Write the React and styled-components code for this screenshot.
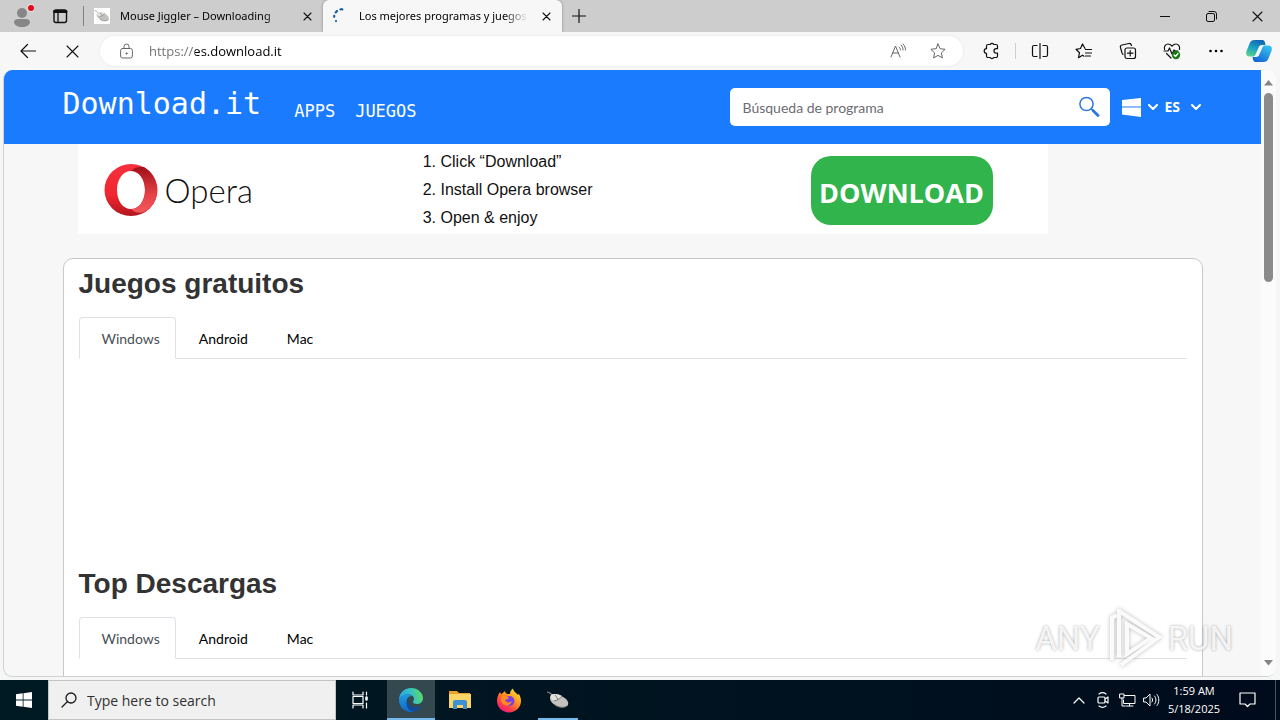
import React, { useState } from "react";
import styled, { createGlobalStyle, css } from "styled-components";

const ui = `"Open Sans", "Noto Sans", sans-serif`;
const site = `Lato, "Open Sans", sans-serif`;
const mono = `"DejaVu Sans Mono", "Liberation Mono", monospace`;
const arial = `"Liberation Sans", Arial, sans-serif`;

const GlobalStyle = createGlobalStyle`
  *, *::before, *::after { box-sizing: border-box; }
  body { margin: 0; font-family: ${ui}; color: #000; }
  button, input, select { font: inherit; color: inherit; border: 0; padding: 0; margin: 0; background: none; }
  svg { display: block; flex: none; }
  a { color: inherit; text-decoration: none; }
`;

const Desktop = styled.div`
  display: flex;
  flex-direction: column;
  height: 100vh;
  overflow: hidden;
  background: #f5f6f6;
`;

/* ---------- browser window ---------- */

const TabStrip = styled.div`
  display: flex;
  align-items: stretch;
  height: 32px;
  padding-left: 3px;
  background: #cdcdcd;
`;

const IconButton = styled.button`
  display: flex;
  align-items: center;
  justify-content: center;
  flex: none;
  width: ${(p) => p.$w}px;
  height: ${(p) => (p.$h ? `${p.$h}px` : "100%")};
  color: ${(p) => p.$color || "#111"};
`;

const StripDivider = styled.span`
  align-self: center;
  width: 1px;
  height: 20px;
  margin-left: 4px;
  background: #808080;
`;

const Tab = styled.div`
  display: flex;
  align-items: center;
  gap: 10px;
  width: 239px;
  padding: 0 8px 0 10px;
  font-family: "Noto Sans", sans-serif;
  font-size: 11px;
  border-radius: 6px 6px 0 0;
  ${(p) => p.$active && css`
    background: #f7f7f7;
    box-shadow: 0 0 3px rgba(0, 0, 0, 0.35);
    clip-path: inset(0 -4px 0 -4px);
  `}
`;

const TabTitle = styled.span`
  flex: 1;
  min-width: 0;
  overflow: hidden;
  white-space: nowrap;
  line-height: 16px;
  mask-image: linear-gradient(to right, #000 calc(100% - 24px), transparent);
`;

const WindowControls = styled.div`
  display: flex;
  margin-left: auto;
`;

const Toolbar = styled.div`
  display: flex;
  align-items: center;
  height: 38px;
  padding-left: 6px;
  background: #f7f7f7;
`;

const AddressBar = styled.div`
  display: flex;
  align-items: center;
  flex: 1;
  height: 30px;
  margin: 0 6px;
  padding: 0 6px 0 20px;
  background: #fff;
  border-radius: 15px;
  box-shadow: 0 0 3px rgba(0, 0, 0, 0.08);
`;

const AddressInput = styled.input`
  flex: 1;
  min-width: 0;
  height: 30px;
  margin-left: 16px;
  outline: 0;
  font-size: 13px;
  color: #000;
  background: linear-gradient(to right, #6e6e6e 46px, #000 46px);
  background-clip: text;
  -webkit-text-fill-color: transparent;
`;

const ToolDivider = styled.span`
  width: 1px;
  height: 16px;
  margin: 0 2px;
  background: #cfcfcf;
`;

const Viewport = styled.main`
  position: relative;
  display: flex;
  flex: 1;
  min-height: 0;
  margin: 0 4px 3px 3px;
  overflow: hidden;
  border: solid #d2d2d2;
  border-width: 0 0 1px 1px;
  border-radius: 9px;
  background: #f7f7f7;
`;

const Scrollbar = styled.div`
  display: flex;
  flex-direction: column;
  align-items: center;
  width: 15px;
  padding: 10px 0;
  background: #fbfbfb;
`;

const Thumb = styled.span`
  width: 9px;
  height: 189px;
  margin-top: 7px;
  margin-bottom: auto;
  border-radius: 5px;
  background: #8b8b8b;
`;

/* ---------- site ---------- */

const Site = styled.div`
  flex: 1;
  min-width: 0;
  overflow: hidden;
  font-family: ${site};
`;

const Container = styled.div`
  width: 100%;
  max-width: 1140px;
  margin: 0 auto;
`;

const Header = styled.header`
  background: #1a7bff;
  color: #fff;
`;

const HeaderRow = styled(Container)`
  display: flex;
  align-items: center;
  height: 74px;
`;

const Brand = styled.a`
  padding-bottom: 6px;
  font-family: ${mono};
  font-size: 30px;
  line-height: 36px;
`;

const Nav = styled.nav`
  display: flex;
  gap: 20px;
  margin-left: 33px;
  padding-top: 8px;
  font-family: ${mono};
  font-size: 17px;
  line-height: 20px;
`;

const SearchForm = styled.form`
  display: flex;
  align-items: center;
  width: 380px;
  height: 38px;
  margin-left: auto;
  padding: 0 9px 0 13px;
  border-radius: 5px;
  background: #fff;
`;

const SearchInput = styled.input`
  flex: 1;
  min-width: 0;
  outline: 0;
  font-size: 14px;
  color: #333;
  &::placeholder { color: #6c6c74; opacity: 1; }
`;

const PlatformButton = styled.button`
  display: flex;
  align-items: center;
  gap: 7px;
  margin-left: 12px;
`;

const Language = styled.label`
  display: flex;
  align-items: center;
  gap: 7px;
  margin: 0 2px 0 7px;
`;

const LanguageSelect = styled.select`
  appearance: none;
  width: 19px;
  outline: 0;
  font-family: ${ui};
  font-size: 14px;
  font-weight: 700;
  line-height: 18px;
`;

const Banner = styled.section`
  display: grid;
  grid-template-columns: 345px 388px 1fr;
  align-items: center;
  max-width: 970px;
  height: 90px;
  margin: 0 15px 24px;
  padding-top: 2px;
  background: #fff;
`;

const OperaMark = styled.div`
  display: flex;
  align-items: center;
  gap: 7px;
  padding-left: 26px;
  font-size: 33px;
  font-weight: 300;
  line-height: 36px;
  color: #111;
`;

const Steps = styled.ol`
  margin: 0;
  padding: 0 0 0 18px;
  font-family: ${arial};
  font-size: 16px;
  line-height: 28px;
  color: #111;
`;

const DownloadLink = styled.a`
  display: flex;
  align-items: center;
  justify-content: center;
  width: 182px;
  height: 69px;
  padding-top: 4px;
  border-radius: 20px;
  background: #31b44b;
  color: #fff;
  font-family: ${ui};
  font-size: 27px;
  font-weight: 700;
`;

const Card = styled(Container)`
  padding: 10px 15px;
  border: 1px solid #c8c8c8;
  border-radius: 10px;
  background: #fff;
`;

const SectionTitle = styled.h2`
  margin: 0 0 18px;
  font-family: ${arial};
  font-size: 28px;
  line-height: 30px;
  font-weight: 700;
  color: #333;
`;

const TabList = styled.div`
  display: flex;
  border-bottom: 1px solid #dee2e6;
`;

const PlatformTab = styled.button`
  height: 42px;
  margin-bottom: -1px;
  padding: 0 15px 0 22px;
  border: 1px solid transparent;
  border-radius: 4px 4px 0 0;
  font-size: 14px;
  color: #000;
  ${(p) => p.$active && css`
    border-color: #dee2e6 #dee2e6 #fff;
    background: #fff;
    color: #495057;
  `}
`;

const Panel = styled.div`
  min-height: 210px;
`;

const Watermark = styled.div`
  position: absolute;
  right: 43px;
  bottom: 4px;
  display: flex;
  align-items: center;
  gap: 5px;
  font-family: Roboto, sans-serif;
  font-size: 33px;
  line-height: 66px;
  color: rgba(255, 255, 255, 0.85);
  text-shadow: 0 0 3px rgba(0, 0, 0, 0.35);
  pointer-events: none;
  svg { filter: drop-shadow(0 0 2px rgba(0, 0, 0, 0.3)); }
`;

/* ---------- taskbar ---------- */

const Taskbar = styled.footer`
  display: flex;
  align-items: stretch;
  height: 40px;
  background: linear-gradient(to right, #001a24, #001420 50%, #000b1c);
  color: #fff;
`;

const TaskSearch = styled.label`
  display: flex;
  align-items: center;
  gap: 10px;
  width: 288px;
  padding-left: 12px;
  border: 1px solid #c4c4c4;
  background: #f0f0f0;
  color: #1c1c1c;
`;

const TaskInput = styled.input`
  flex: 1;
  min-width: 0;
  outline: 0;
  font-size: 14px;
  &::placeholder { color: #303030; opacity: 1; }
`;

const TaskButton = styled.button`
  display: flex;
  align-items: center;
  justify-content: center;
  width: 48px;
  margin-left: ${(p) => p.$gap || 0}px;
  background: ${(p) => (p.$focused ? "#33484f" : "none")};
  box-shadow: ${(p) => (p.$focused ? "inset 0 -2px #76b9ed" : "none")};
  ${(p) => p.$open && css`
    background: linear-gradient(#76b9ed, #76b9ed) center bottom / 40px 2px no-repeat;
  `}
`;

const Tray = styled.div`
  display: flex;
  align-items: center;
  margin-left: auto;
`;

const Clock = styled.time`
  width: 62px;
  text-align: center;
  font-size: 11px;
  line-height: 18px;
`;

const ShowDesktop = styled.button`
  align-self: stretch;
  width: 5px;
  margin-left: 6px;
  border-left: 1px solid #4a5260;
`;

/* ---------- icons ---------- */

const Line = ({ w, h = w, sw = 1, children, ...rest }) => (
  <svg width={w} height={h} viewBox={`0 0 ${w} ${h}`} fill="none" stroke="currentColor"
    strokeWidth={sw} strokeLinecap="round" strokeLinejoin="round" aria-hidden="true" {...rest}>
    {children}
  </svg>
);

const Avatar = () => (
  <svg width="24" height="26" viewBox="0 0 24 26" aria-hidden="true">
    <circle cx="12" cy="10" r="5" fill="#868686" />
    <path d="M4 19c0-2 2-3 4-3h8c2 0 4 1 4 3 0 3-4 5-8 5s-8-2-8-5z" fill="#868686" />
    <circle cx="21" cy="5" r="4" fill="#e5e0e0" />
    <circle cx="21" cy="5" r="3" fill="#e00b1c" />
  </svg>
);

const Workspaces = () => (
  <Line w={16} h={16}>
    <rect x="2" y="2" width="12.500" height="12.500" rx="2" strokeWidth="1.4" />
    <path d="M2.500 3.500h11.500" strokeWidth="3" /><path d="M6 4v10" strokeWidth="1.3" />
  </Line>
);

const MouseArt = ({ size = 16 }) => (
  <svg width={size} height={size} viewBox="0 0 24 24" aria-hidden="true">
    <path d="M1 4c3 0 3 2 6 3" stroke="#9a9a9a" strokeWidth="1.2" fill="none" />
    <path d="M5 7c3-2 8-1 12 2 4 2 6 5 5 8-2 3-7 3-11 1C6 16 2 11 5 7z" fill="#c4c2bf" />
    <path d="M5 7c3-2 8-1 11 1-1 2-4 4-8 5C5 11 4 9 5 7z" fill="#e4e2df" />
    <path d="M8 13c4-1 7-3 8-5M9 7l3 4M9 17c4 3 10 3 13 0" stroke="#7b7875" strokeWidth="1" fill="none" />
  </svg>
);

const Favicon = styled.span`
  display: flex;
  align-items: center;
  justify-content: center;
  flex: none;
  width: 16px;
  height: 16px;
  background: ${(p) => (p.$plain ? "none" : "#fff")};
`;

const Spinner = () => (
  <Line w={16} stroke="#1560a8" sw={2.2}>
    <path d="M7.500 1.400C8.500 1 9 1.100 9.300 1.300" /><path d="M2.700 4.400 4 3" />
    <path d="M1.200 8.800V7.800" /><path d="M3 13v.1" />
  </Line>
);

const Cross = ({ size = 9, sw = 1.1 }) => (
  <Line w={size} sw={sw}><path d={`M1 1 ${size - 1} ${size - 1}M${size - 1} 1 1 ${size - 1}`} /></Line>
);

const Lock = () => (
  <Line w={13} h={17} stroke="#666"><rect x=".6" y="5.500" width="11.800" height="9.500" rx="2" />
    <path d="M4 5.500V3.500a2.500 2.500 0 0 1 5 0v2" /><circle cx="6.500" cy="10.500" r=".6" fill="#666" /></Line>
);

const ReadAloud = () => (
  <Line w={18} stroke="#666"><path d="M2 15 6.500 4l4.500 11M3.500 11h6M10 5c1 1 1.500 2 1.500 3M12 3c1.500 1.500 2 3 2 5M14 2c2 2 2.500 4 2.500 6" transform="translate(-1 0)" /></Line>
);

const starPath = "M9 2l2.100 4.700 5 .6-3.700 3.500 1 5.100L9 13.400 4.600 15.900l1-5.100L1.900 7.300l5-.6z";

const Star = () => <Line w={18} stroke="#666"><path d={starPath} /></Line>;

const Puzzle = () => (
  <Line w={18} sw={1.2}><path d="M6 2.500h2.200a2 2 0 0 1 3.600 0H14a1.500 1.500 0 0 1 1.500 1.500v2.700h-1.300a2.200 2.200 0 0 0 0 4.400h1.300V14a1.500 1.500 0 0 1-1.500 1.500h-2.200a2 2 0 0 1-3.600 0H6A1.500 1.500 0 0 1 4.500 14v-2.700a2.300 2.300 0 0 1 0-4.600V4A1.500 1.500 0 0 1 6 2.500z" /></Line>
);

const Split = () => (
  <Line w={18} sw={1.2}><path d="M6 3.500H3A1.500 1.500 0 0 0 1.500 5v8A1.500 1.500 0 0 0 3 14.500h3M12 3.500h3A1.500 1.500 0 0 1 16.500 5v8a1.500 1.500 0 0 1-1.500 1.500h-3M9 1.500v15" /></Line>
);

const Favorites = () => (
  <Line w={18} sw={1.2}><path d="M10 6.500 7.500 2 5.500 6.500l-4.500.8 3.500 3.400-1 5 4-2.500 1.500 1M10.500 7.500h6M10.500 11h6M10.500 14h5" /></Line>
);

const Collections = () => (
  <Line w={18} sw={1.2}><rect x="6" y="6" width="10.500" height="10.500" rx="2" />
    <path d="M11.200 8.500v5.500M8.500 11.200H14M4 12.500 3 11 1.500 5.500C1 4.300 1.700 3.300 3 3l7-1.500c1.200-.2 2 .3 2.500 2" /></Line>
);

const Health = () => (
  <Line w={18} sw={1.2}><path d="M1.500 7.500C.8 3.800 3 2 5 2c1.800 0 3 1 4 2.200C10 3 11.200 2 13 2c2 0 4.200 1.800 3.500 5.500M1 9h4l1.500-3 2.500 6 2-4 1 1h3M3.500 11.500 8 16" />
    <circle cx="13" cy="13" r="4.200" fill="#167a16" stroke="none" /><path d="m11 13 1.500 1.500 2.500-3" stroke="#fff" /></Line>
);

const Dots = () => (
  <svg width="16" height="4" viewBox="0 0 16 4" aria-hidden="true"><circle cx="2.500" cy="2" r="1.300" /><circle cx="8" cy="2" r="1.300" /><circle cx="13.500" cy="2" r="1.300" /></svg>
);

const Copilot = () => (
  <svg width="26" height="24" viewBox="0 0 24 24" preserveAspectRatio="none" aria-hidden="true">
    <defs>
      <linearGradient id="cpA" x1="0.600" y1="0" x2="0.200" y2="1"><stop offset="0" stopColor="#1267b4" /><stop offset=".5" stopColor="#1aa3c4" /><stop offset="1" stopColor="#5fd28b" /></linearGradient>
      <linearGradient id="cpB" x1="0.800" y1="0" x2="0.200" y2="1"><stop offset="0" stopColor="#36c3f0" /><stop offset="1" stopColor="#1563d2" /></linearGradient>
    </defs>
    <path d="M8 1h7c2 0 2.500 1.500 3 5h-3c-2 0-3 1-3.500 3L9 15c-.5 2-1.500 2.500-3 2.500H3C0 17.500-.3 14.500.5 12L3.500 4C4.300 2 5.500 1 8 1z" fill="url(#cpA)" />
    <path d="M16 23H9c-2 0-2.500-1.500-3-5h3c2 0 3-1 3.500-3L15 9c.5-2 1.500-2.500 3-2.500h3c3 0 3.300 3 2.500 5.500l-3 8c-.8 2-2 3-4.500 3z" fill="url(#cpB)" />
  </svg>
);

const Chevron = () => <Line w={10} h={6} sw={2}><path d="m1 1 4 4 4-4" /></Line>;

const Magnifier = () => (
  <Line w={22} stroke="#2f76e0"><circle cx="8.500" cy="8" r="6.600" strokeWidth="1.500" /><path d="m15 14.500 5 5" strokeWidth="2.800" /><path d="m13 12.500 2 2" strokeWidth="1.500" /></Line>
);

const WindowsPanes = () => (
  <svg width="19" height="19" viewBox="0 0 19 19" fill="#fff" aria-hidden="true"><path d="M0 2 19 0v8.500H0zM0 9.500h19V19L0 16.400z" /></svg>
);

const StartLogo = () => (
  <svg width="16" height="16" viewBox="0 0 16 16" fill="#fff" aria-hidden="true"><path d="M0 2.200 6.700 1.300v6.200H0zM7.500 1.200 16 0v7.500H7.500zM0 8.400h6.700v6.300L0 13.800zM7.500 8.400H16V16l-8.500-1.200z" /></svg>
);

const OperaO = () => (
  <svg width="54" height="54" viewBox="0 0 54 54" aria-hidden="true">
    <defs>
      <linearGradient id="opA" x1="0" y1="0" x2="0" y2="1"><stop offset="0" stopColor="#f5303e" /><stop offset=".6" stopColor="#f0262f" /><stop offset="1" stopColor="#b3161f" /></linearGradient>
      <linearGradient id="opB" x1="0" y1="0" x2="0" y2="1"><stop offset="0" stopColor="#a01018" /><stop offset=".6" stopColor="#e64247" /><stop offset="1" stopColor="#f2585c" /></linearGradient>
    </defs>
    <path fillRule="evenodd" d="M27 1a26.500 26 0 1 0 0 52 26.500 26 0 1 0 0-52zm0 7c8 0 14 8 14 19s-6 19-14 19-14-8-14-19S19 8 27 8z" fill="url(#opA)" />
    <path d="M27 8c3-4 8-4 13-4 8 5 13 13 13 23s-5 18-13 22c-5 2-10 0-13-3 8 0 14-8 14-19S35 8 27 8z" fill="url(#opB)" />
  </svg>
);

const Play = () => (
  <svg width="58" height="66" viewBox="0 0 58 66" fill="none" stroke="rgba(255,255,255,.9)" strokeWidth="4" aria-hidden="true">
    <path d="M7 54V12l5-3M14 5l40 26-38 28M14 3v48M22 18v30l24-16z" />
  </svg>
);

const TaskView = () => (
  <Line w={18} sw={1.2}><path d="M2 1v3h10V1M2 17v-3h10v3M2 5.500v7h10v-7zM15.500 1v3M15.500 12v5" /><path d="M15.500 6.500v2" strokeWidth="2.500" /></Line>
);

const Edge = () => (
  <svg width="26" height="26" viewBox="0 0 26 26" aria-hidden="true">
    <defs>
      <linearGradient id="edA" x1="0" y1="0.500" x2="1" y2="0.300"><stop offset="0" stopColor="#2aa7e8" /><stop offset=".5" stopColor="#35c1c9" /><stop offset="1" stopColor="#5fdc5a" /></linearGradient>
      <linearGradient id="edB" x1="0" y1="0" x2="0" y2="1"><stop offset="0" stopColor="#1f9be0" /><stop offset="1" stopColor="#1268c4" /></linearGradient>
    </defs>
    <path d="M1 13C1 6 6 1 13 1c7 0 12 5 12 10 0 4-3 6-6 6-2.500 0-4-.8-4-2 0-.9 1-1.300 1-3 0-2.400-2.300-4.500-6-4.500C5 7.500 2 10 1 13z" fill="url(#edA)" />
    <path d="M1 13c1-3.500 4.500-5.500 8.500-5.500 2 0 3.500.6 4.700 1.500C10 9 8.500 12 8.500 15c0 5 4 9 8 9.400-1 .4-2.300.6-3.500.6C6 25 1 19.500 1 13z" fill="url(#edB)" />
    <path d="M10 12c-1 5 3 9 8 8.500 2 0 3.500-.6 4.500-1 .6-.2.800.2.500.6-2 3-5 4.500-8 4.300-5-.5-8.500-6.400-5-12.400z" fill="#134b9b" />
  </svg>
);

const Explorer = () => (
  <svg width="24" height="20" viewBox="0 0 24 20" aria-hidden="true">
    <path d="M1 1h8l2 2h11v5H1z" fill="#e8a32b" /><path d="M1 4h22v14H1z" fill="#fcd569" />
    <path d="M5 19v-7c0-1 .8-2 2-2h10c1.200 0 2 1 2 2v7h-4v-4H9v4z" fill="#3f92d0" />
  </svg>
);

const Firefox = () => (
  <svg width="24" height="25" viewBox="0 0 24 25" aria-hidden="true">
    <defs><linearGradient id="ffA" x1="0.900" y1="0" x2="0.200" y2="1"><stop offset="0" stopColor="#fff13d" /><stop offset=".4" stopColor="#ff9a1f" /><stop offset=".75" stopColor="#ff3b4c" /><stop offset="1" stopColor="#e5158a" /></linearGradient></defs>
    <path d="M3 4c.3 1 .8 1.700 1.500 2C5.500 4.800 7 4.300 8 3c.2 1.500 1 2.500 2.500 3H13c0-2 .8-4 3-5.500.3 3 3.500 4.500 5 6.500.5-.3.600-1 .5-1.500C23.300 8 24 10.300 24 13c0 6.500-5.500 11.500-12 11.500S0 19.500 0 13c0-3.500 1-6.500 3-9z" fill="url(#ffA)" />
    <circle cx="12.500" cy="13" r="5" fill="#7b3fe4" /><path d="M5 8c3-1 5 0 7 2-1 1.500-3 1.300-4 2 1 3 5 3 7 1-1 4-6 6-9 3-2-2-2.500-5-1-8z" fill="#ff8a1f" />
  </svg>
);

/* ---------- app ---------- */

const platforms = ["Windows", "Android", "Mac"];

function PlatformSection({ title }) {
  const [current, setCurrent] = useState("Windows");
  return (
    <section>
      <SectionTitle>{title}</SectionTitle>
      <TabList role="tablist" aria-label={title}>
        {platforms.map((name) => (
          <PlatformTab key={name} type="button" role="tab" aria-selected={name === current}
            $active={name === current} onClick={() => setCurrent(name)}>
            {name}
          </PlatformTab>
        ))}
      </TabList>
      <Panel role="tabpanel" />
    </section>
  );
}

export default function App() {
  return (
    <Desktop>
      <GlobalStyle />
      <TabStrip>
        <IconButton $w={38} aria-label="Profile"><Avatar /></IconButton>
        <IconButton $w={38} aria-label="Workspaces"><Workspaces /></IconButton>
        <StripDivider />
        <Tab>
          <Favicon><MouseArt /></Favicon>
          <TabTitle>Mouse Jiggler – Downloading</TabTitle>
          <IconButton $w={16} aria-label="Close tab"><Cross /></IconButton>
        </Tab>
        <Tab $active>
          <Favicon $plain><Spinner /></Favicon>
          <TabTitle>Los mejores programas y juegos</TabTitle>
          <IconButton $w={16} aria-label="Close tab"><Cross /></IconButton>
        </Tab>
        <IconButton $w={34} aria-label="New tab"><Line w={14} sw={1.2}><path d="M7 .5v13M.5 7h13" /></Line></IconButton>
        <WindowControls>
          <IconButton $w={46} aria-label="Minimize"><Line w={10}><path d="M0 5.500h10" /></Line></IconButton>
          <IconButton $w={46} aria-label="Restore">
            <Line w={11}><rect x=".5" y="2.500" width="8" height="8" rx="1.500" /><path d="M3 .5h5a2.500 2.500 0 0 1 2.500 2.500v5" /></Line>
          </IconButton>
          <IconButton $w={46} aria-label="Close"><Cross size={11} sw={1.1} /></IconButton>
        </WindowControls>
      </TabStrip>

      <Toolbar>
        <IconButton $w={44} aria-label="Back"><Line w={16} sw={1.2}><path d="M15.500 8H1M7.500 1.500 1 8l6.500 6.500" /></Line></IconButton>
        <IconButton $w={44} aria-label="Stop"><Cross size={13} sw={1.1} /></IconButton>
        <AddressBar>
          <Lock />
          <AddressInput aria-label="Address" defaultValue="https://es.download.it" spellCheck={false} />
          <IconButton $w={40} aria-label="Read aloud"><ReadAloud /></IconButton>
          <IconButton $w={38} aria-label="Add to favorites"><Star /></IconButton>
        </AddressBar>
        <IconButton $w={44} aria-label="Extensions"><Puzzle /></IconButton>
        <ToolDivider />
        <IconButton $w={44} aria-label="Split screen"><Split /></IconButton>
        <IconButton $w={44} aria-label="Favorites"><Favorites /></IconButton>
        <IconButton $w={44} aria-label="Collections"><Collections /></IconButton>
        <IconButton $w={44} aria-label="Browser essentials"><Health /></IconButton>
        <IconButton $w={44} aria-label="Settings and more"><Dots /></IconButton>
        <IconButton $w={42} aria-label="Copilot"><Copilot /></IconButton>
      </Toolbar>

      <Viewport>
        <Site>
          <Header>
            <HeaderRow>
              <Brand href="#">Download.it</Brand>
              <Nav>
                <a href="#apps">APPS</a>
                <a href="#juegos">JUEGOS</a>
              </Nav>
              <SearchForm role="search" onSubmit={(e) => e.preventDefault()}>
                <SearchInput aria-label="Búsqueda de programa" placeholder="Búsqueda de programa" />
                <IconButton $w={24} aria-label="Buscar"><Magnifier /></IconButton>
              </SearchForm>
              <PlatformButton type="button" aria-label="Plataforma"><WindowsPanes /><Chevron /></PlatformButton>
              <Language>
                <LanguageSelect aria-label="Idioma" defaultValue="ES"><option>ES</option></LanguageSelect>
                <Chevron />
              </Language>
            </HeaderRow>
          </Header>
          <Container>
            <Banner>
              <OperaMark><OperaO /><span>Opera</span></OperaMark>
              <Steps>
                <li>Click “Download”</li>
                <li>Install Opera browser</li>
                <li>Open &amp; enjoy</li>
              </Steps>
              <DownloadLink href="#download">DOWNLOAD</DownloadLink>
            </Banner>
          </Container>
          <Card>
            <PlatformSection title="Juegos gratuitos" />
            <PlatformSection title="Top Descargas" />
          </Card>
        </Site>
        <Scrollbar aria-hidden="true">
          <svg width="9" height="6" viewBox="0 0 9 6" fill="#858585"><path d="M4.500 0 9 5.500H0z" /></svg>
          <Thumb />
          <svg width="9" height="6" viewBox="0 0 9 6" fill="#858585"><path d="M4.500 5.500 9 0H0z" /></svg>
        </Scrollbar>
        <Watermark><span>ANY</span><Play /><span>RUN</span></Watermark>
      </Viewport>

      <Taskbar>
        <TaskButton aria-label="Start"><StartLogo /></TaskButton>
        <TaskSearch>
          <Line w={16} sw={1.3}><circle cx="10" cy="6" r="5" /><path d="M6.500 9.500 1 15" /></Line>
          <TaskInput aria-label="Type here to search" placeholder="Type here to search" />
        </TaskSearch>
        <TaskButton aria-label="Task View"><TaskView /></TaskButton>
        <TaskButton $gap={3} $focused aria-label="Microsoft Edge"><Edge /></TaskButton>
        <TaskButton $gap={1} aria-label="File Explorer"><Explorer /></TaskButton>
        <TaskButton $gap={1} aria-label="Firefox"><Firefox /></TaskButton>
        <TaskButton $gap={1} $open aria-label="Mouse Jiggler"><MouseArt size={24} /></TaskButton>
        <Tray>
          <IconButton $w={24} $color="#fff" aria-label="Show hidden icons"><Line w={12} h={7} sw={1.2}><path d="m1 6 5-5 5 5" /></Line></IconButton>
          <IconButton $w={24} $color="#fff" aria-label="Meet Now">
            <Line w={14} h={16} sw={1.2}><rect x="2" y="5" width="7" height="6" rx="1" /><path d="m9 7 3-2v6L9 9M3 2c2-1.500 5-1.500 7 0M3 14c2 1.500 5 1.500 7 0" /></Line>
          </IconButton>
          <IconButton $w={24} $color="#fff" aria-label="Network">
            <Line w={17} h={14}><path d="M5.500 2.500H16v8H4.500V7M1 1h4v4H1zM3 5v8h3M7 13h7M10.500 10.500V13" /></Line>
          </IconButton>
          <IconButton $w={24} $color="#fff" aria-label="Volume">
            <Line w={17} h={14}><path d="M1 5h2l4-4v12L3 9H1zM9 5c.8 1 .8 3 0 4M11.500 3c2 2.500 2 5.500 0 8M14 1.500c2.500 3 2.500 8 0 11" /></Line>
          </IconButton>
          <Clock>1:59 AM<br />5/18/2025</Clock>
          <IconButton $w={44} $color="#fff" aria-label="Notifications">
            <Line w={17} h={16} sw={1.2}><path d="M1 1h15v11h-5l-2.500 2.500L6 12H1z" /></Line>
          </IconButton>
          <ShowDesktop aria-label="Show desktop" />
        </Tray>
      </Taskbar>
    </Desktop>
  );
}
